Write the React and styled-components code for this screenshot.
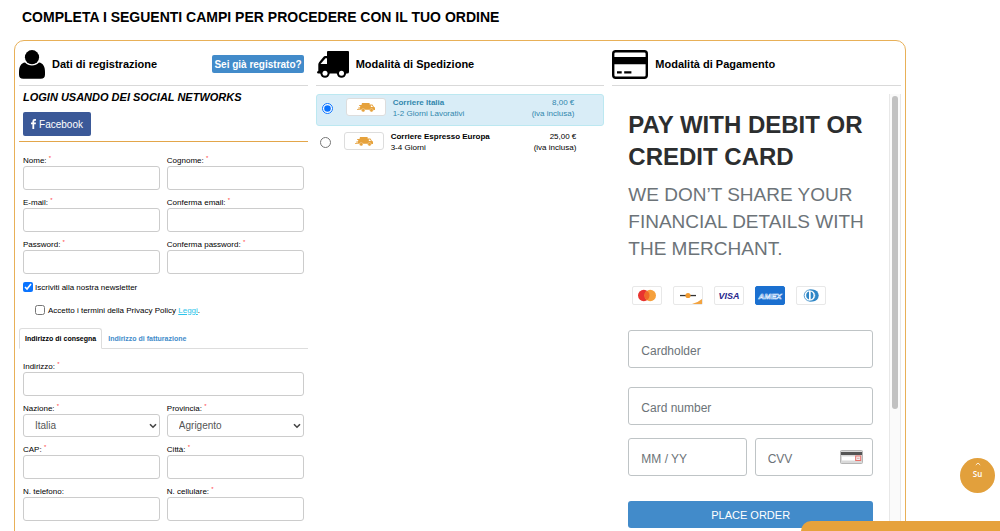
import React from "react";
import styled, { createGlobalStyle } from "styled-components";

const GlobalStyle = createGlobalStyle`
  * {
    box-sizing: border-box;
  }
  body {
    margin: 0;
    background: #fff;
    color: #000;
    font-family: "Helvetica Neue", "Liberation Sans", Arial, sans-serif;
    font-size: 8px;
  }
  input, select, button {
    font-family: inherit;
    margin: 0;
  }
`;

// page frame
const Page = styled.main`
  padding: 8px 94px 40px 14px;
`;

const PageTitle = styled.h1`
  margin: 0 0 14px;
  padding-left: 8px;
  font-size: 14px;
  line-height: 18px;
`;

const Panel = styled.div`
  display: grid;
  grid-template-columns: repeat(3, minmax(0, 1fr));
  gap: 8px;
  padding: 0 4px 40px;
  border: 1px solid #e8b058;
  border-radius: 10px;
`;

const Column = styled.section`
  display: flex;
  flex-direction: column;
`;

const ColumnHeader = styled.header`
  display: flex;
  align-items: center;
  gap: 7px;
  height: 45px;
  padding: 2px 4px 0 0;
  border-bottom: 1px solid #d9d9d9;
`;

const ColumnTitle = styled.h2`
  flex: 1;
  margin: 0;
  font-size: 11px;
  line-height: 16px;
`;

const LoginButton = styled.button`
  height: 18px;
  padding: 0 2px;
  border: 0;
  border-radius: 2px;
  background: #428bca;
  color: #fff;
  font-size: 10px;
  font-weight: bold;
`;

// registration column
const SocialBox = styled.div`
  padding: 4px 4px 5px;
  border-bottom: 1px solid #e3a64a;
`;

const SocialTitle = styled.h3`
  margin: 0 0 8px;
  font-size: 11px;
  font-style: italic;
  line-height: 14px;
`;

const FacebookButton = styled.button`
  display: flex;
  align-items: center;
  justify-content: center;
  gap: 3px;
  width: 68px;
  height: 24px;
  border: 0;
  border-radius: 2px;
  background: #3b5998;
  color: #fff;
  font-size: 10px;
`;

const Fields = styled.div`
  display: grid;
  grid-template-columns: 1fr 1fr;
  gap: 6px 7px;
  padding: ${props => props.$top}px 4px 0;
`;

const FieldBox = styled.div`
  display: flex;
  flex-direction: column;
  grid-column: ${props => (props.$wide ? "1 / -1" : "auto")};
`;

const Label = styled.label`
  height: 12px;
  line-height: 13px;
`;

const Required = styled.span`
  color: #f44;
  font-size: 6px;
  line-height: 1;
  vertical-align: 3px;
`;

const TextInput = styled.input`
  width: 100%;
  height: 24px;
  padding: 0 10px;
  border: 1px solid #ccc;
  border-radius: 3px;
  background: #fff;
  font-size: 10px;
`;

const SelectWrap = styled.div`
  display: grid;
  align-items: center;

  > * {
    grid-area: 1 / 1;
  }
  > svg {
    justify-self: end;
    margin-right: 3px;
    pointer-events: none;
  }
`;

const Select = styled.select`
  appearance: none;
  width: 100%;
  height: 23px;
  padding: 0 11px 1px;
  border: 1px solid #ccc;
  border-radius: 3px;
  background: #fff;
  color: #555;
  font-size: 10px;
`;

const CheckLabel = styled.label`
  display: flex;
  align-items: center;
  gap: ${props => (props.$nested ? 3 : 2)}px;
  height: 12px;
  margin: ${props => (props.$nested ? "11px 4px 0 16px" : "7px 4px 0")};

  input {
    width: 10px;
    height: 10px;
    accent-color: #0a74ff;
  }
  a {
    color: #2bc4ea;
    text-decoration: underline;
  }
`;

const Tabs = styled.div`
  display: flex;
  margin-top: 12px;
  border-bottom: 1px solid #ddd;
`;

const Tab = styled.button`
  height: 21px;
  margin-bottom: -1px;
  padding: 0 5px;
  border: 1px solid ${props => (props.$active ? "#ddd" : "transparent")};
  border-bottom-color: ${props => (props.$active ? "#fff" : "transparent")};
  border-radius: 3px 3px 0 0;
  background: ${props => (props.$active ? "#fff" : "transparent")};
  color: ${props => (props.$active ? "#000" : "#428bca")};
  font-size: 7px;
  font-weight: bold;
`;

// shipping column
const Carriers = styled.div`
  display: flex;
  flex-direction: column;
  gap: 4px;
  padding-top: 8px;
`;

const Carrier = styled.label`
  display: flex;
  align-items: flex-start;
  padding: ${props => (props.$selected ? "2px 29px 6px 5px" : "0 27px 6px 3px")};
  border: 1px solid ${props => (props.$selected ? "#bce8f1" : "transparent")};
  border-radius: 3px;
  background: ${props => (props.$selected ? "#d9edf7" : "transparent")};
  color: ${props => (props.$selected ? "#3187ad" : "#000")};
  line-height: 11px;

  input {
    width: 11px;
    height: 11px;
    margin-top: 6px;
    accent-color: #0a74ff;
  }
`;

const CarrierLogo = styled.span`
  display: flex;
  align-items: center;
  justify-content: center;
  width: 40px;
  height: 18px;
  margin: 1px 7px 0 13px;
  border: 1px solid #ddd;
  border-radius: 3px;
  background: #fff;
  color: #e6a23c;
`;

const CarrierName = styled.span`
  flex: 1;

  strong {
    display: block;
  }
`;

const CarrierPrice = styled.span`
  text-align: right;
`;

// payment column
const PaymentFrame = styled.div`
  display: flex;
  flex: 1;
  margin-top: 8px;
`;

const PaymentForm = styled.form`
  flex: 1;
  padding: 15px 16px 0;
  color: #2c2e2f;
`;

const PayTitle = styled.h3`
  margin: 0;
  font-size: 24px;
  line-height: 32px;
`;

const PayNote = styled.p`
  margin: 8px 0 24px;
  color: #6c7378;
  font-size: 19px;
  line-height: 27px;
`;

const CardLogos = styled.div`
  display: flex;
  gap: 11px;
  margin: 0 0 25px 4px;
`;

const CardLogo = styled.span`
  display: flex;
  width: 30px;
  height: 19px;
  border: 1px solid ${props => (props.$filled ? "#1b70d0" : "#e8e8e8")};
  border-radius: 2px;
  background: ${props => (props.$filled ? "#1b70d0" : "#fff")};
`;

const PayInput = styled.input`
  width: 100%;
  min-width: 0;
  height: 38px;
  padding: 3px 12px 0;
  border: 1px solid #bfc4c6;
  border-radius: 3px;
  background: #fff;
  color: #2c2e2f;
  font-size: 12px;

  &::placeholder {
    color: #6c7378;
    opacity: 1;
  }
`;

const PayRows = styled.div`
  display: grid;
  gap: 19px;
`;

const PayPair = styled.div`
  display: grid;
  grid-template-columns: 1fr 1fr;
  gap: 8px;
  margin: 13px 0 25px;
`;

const CvvWrap = styled.div`
  display: grid;
  align-items: center;

  > * {
    grid-area: 1 / 1;
  }
  > svg {
    justify-self: end;
    margin-right: 10px;
  }
`;

const PlaceOrder = styled.button`
  width: 100%;
  height: 27px;
  border: 0;
  border-radius: 3px;
  background: #428bca;
  color: #fff;
  font-size: 11px;
`;

const ScrollTrack = styled.div`
  width: 12px;
  padding: 2px;
  border: solid #e8e8e8;
  border-width: 0 1px;
  background: #fafafa;
`;

const ScrollThumb = styled.div`
  height: 313px;
  border-radius: 4px;
  background: #c1c1c1;
`;

// floating parts
const BackToTop = styled.a`
  position: fixed;
  right: 5px;
  bottom: 38px;
  display: flex;
  flex-direction: column;
  align-items: center;
  gap: 2px;
  width: 35px;
  height: 35px;
  padding-top: 4px;
  border-radius: 50%;
  background: #e2a03c;
  color: #fff;
  font-family: "Open Sans", sans-serif;
  font-size: 8px;
  font-weight: 600;
  line-height: 11px;
  text-decoration: none;
`;

const BottomBar = styled.div`
  position: fixed;
  right: 0;
  bottom: 0;
  width: 199px;
  height: 10px;
  border-radius: 10px 0 0 0;
  background: #e6a23c;
`;

const UserIcon = () => (
  <svg width="26" height="29" viewBox="0 0 26 29" aria-hidden="true">
    <circle cx="13" cy="7.200" r="7.100" />
    <path d="M6 12.400C2 12.800 0 16.500 0 22v2.500Q0 28.800 4.300 28.800h17.400Q26 28.800 26 24.500V22c0-5.500-2-9.200-6-9.600-1.800 2-4.200 3-7 3s-5.200-1-7-3z" />
  </svg>
);

const TruckIcon = () => (
  <svg width="33" height="27" viewBox="0 0 33 27" aria-hidden="true">
    <path d="M12 0h20q1 0 1 1v20q0 1.500-2 1.500H2.500Q1 22.500 1 21.200q0-1 1.300-1.200v-6.500q0-1.500 1-2.500l3.700-4.600Q8 5 9.500 5H11V1q0-1 1-1z" />
    <path d="M11 7.300H9.500L4.500 13H11z" fill="#fff" />
    <circle cx="9" cy="22.200" r="4.600" />
    <circle cx="25.500" cy="22.200" r="4.600" />
    <circle cx="9" cy="22.200" r="2.500" fill="#fff" />
    <circle cx="25.500" cy="22.200" r="2.500" fill="#fff" />
  </svg>
);

const CardIcon = () => (
  <svg width="36" height="29" viewBox="0 0 36 29" aria-hidden="true">
    <rect x="1.200" y="1.200" width="33.600" height="26.600" rx="2.500" fill="none" stroke="#000" strokeWidth="2.400" />
    <path d="M1 7h34v7.300H1zM5 21.300h4.700v2.300H5zM12.200 21.300h7.200v2.300h-7.200z" />
  </svg>
);

const FacebookIcon = () => (
  <svg width="5" height="10" viewBox="0 0 5 10" fill="currentColor" aria-hidden="true">
    <path d="M5 .1v1.600H4q-.8 0-.8.8v1.100H5l-.25 1.700H3.200V10H1.400V5.300H0V3.600h1.400V2.300Q1.400 0 3.700 0z" />
  </svg>
);

const ChevronDown = () => (
  <svg width="8" height="6" viewBox="0 0 8 6" fill="none" aria-hidden="true">
    <path d="M1 1.200l3 3 3-3" stroke="#444" strokeWidth="1.600" />
  </svg>
);

const FastTruck = () => (
  <svg width="18" height="9" viewBox="0 0 18 9" fill="currentColor" aria-hidden="true">
    <path d="M5 0h7.600v6.800H2.600L3 5.500H1l.4-1H3L3.300 3H2l.4-1h2.100zM12.500 1.400h2.900L17 4l1 .6v2.400h-5.500z" />
    <path d="M0 6.200h2.800v.8H0z" />
    <path d="M13.800 2.400h1.200l1 1.600h-2.200z" fill="#fff" />
    <circle cx="6.200" cy="7.200" r="1.700" stroke="#fff" strokeWidth=".3" />
    <circle cx="14.500" cy="7.200" r="1.700" stroke="#fff" strokeWidth=".3" />
  </svg>
);

const MastercardLogo = () => (
  <svg width="28" height="17" viewBox="0 0 28 17" aria-hidden="true">
    <circle cx="10.800" cy="8.500" r="5.800" fill="#e8342f" />
    <circle cx="17.200" cy="8.500" r="5.800" fill="#f5a03c" />
    <path d="M14 3.700a5.800 5.800 0 0 1 0 9.600 5.800 5.800 0 0 1 0-9.600z" fill="#f06a28" />
  </svg>
);

const DiscoverLogo = () => (
  <svg width="28" height="17" viewBox="0 0 28 17" aria-hidden="true">
    <path d="M6 7.900h16v1.300H6z" fill="#333" />
    <circle cx="14" cy="8.500" r="2.600" fill="#f09a30" />
    <path d="M28 12v5H18q6-1.500 10-5z" fill="#f3a33f" />
  </svg>
);

const VisaLogo = () => (
  <svg width="28" height="17" viewBox="0 0 28 17" aria-hidden="true">
    <text x="14" y="11.500" textAnchor="middle" fontSize="9" fontWeight="bold" fontStyle="italic" fill="#26268c">VISA</text>
  </svg>
);

const AmexLogo = () => (
  <svg width="28" height="17" viewBox="0 0 28 17" aria-hidden="true">
    <text x="14" y="11.500" textAnchor="middle" fontSize="8" fontWeight="bold" fontStyle="italic" fill="#1b70d0" stroke="#e8f2ff" strokeWidth=".6">AMEX</text>
  </svg>
);

const DinersLogo = () => (
  <svg width="28" height="17" viewBox="0 0 28 17" aria-hidden="true">
    <path d="M12.500 2.500h3.200a6 6 0 0 1 0 12h-3.200z" fill="#2e86c6" />
    <circle cx="12.800" cy="8.500" r="5.600" fill="#fff" stroke="#2e86c6" strokeWidth=".8" />
    <path d="M12 4.600a4.100 4.100 0 0 0 0 7.800zM13.700 4.600a4.100 4.100 0 0 1 0 7.800z" fill="#2e86c6" />
  </svg>
);

const CvvIcon = () => (
  <svg width="23" height="14" viewBox="0 0 23 14" aria-hidden="true">
    <rect x=".5" y=".5" width="22" height="13" rx="1" fill="#d9d9d9" stroke="#b5b5b5" />
    <path d="M1 2h21v3H1z" fill="#555" />
    <path d="M2 6.500h13v4H2z" fill="#fff" />
    <rect x="15.700" y="6" width="5" height="4.500" fill="#f5eded" stroke="#e8706a" />
    <path d="M17 8.300h2.500" stroke="#c99" strokeWidth=".8" />
  </svg>
);

const ChevronUp = () => (
  <svg width="6" height="4" viewBox="0 0 6 4" fill="none" aria-hidden="true">
    <path d="M.8 3L3 1l2.200 2" stroke="#fff" strokeWidth=".8" />
  </svg>
);

const accountFields = [
  { id: "nome", label: "Nome:" },
  { id: "cognome", label: "Cognome:" },
  { id: "email", label: "E-mail:", type: "email" },
  { id: "email2", label: "Conferma email:", type: "email" },
  { id: "password", label: "Password:", type: "password" },
  { id: "password2", label: "Conferma password:", type: "password" }
];

const addressFields = [
  { id: "indirizzo", label: "Indirizzo:", wide: true },
  { id: "nazione", label: "Nazione:", options: ["Italia"] },
  { id: "provincia", label: "Provincia:", options: ["Agrigento"] },
  { id: "cap", label: "CAP:" },
  { id: "citta", label: "Città:" },
  { id: "telefono", label: "N. telefono:", optional: true },
  { id: "cellulare", label: "N. cellulare:" }
];

const carriers = [
  { id: "italia", name: "Corriere Italia", time: "1-2 Giorni Lavorativi", price: "8,00 €" },
  { id: "europa", name: "Corriere Espresso Europa", time: "3-4 Giorni", price: "25,00 €" }
];

const cardLogos = [
  { id: "mastercard", logo: <MastercardLogo /> },
  { id: "discover", logo: <DiscoverLogo /> },
  { id: "visa", logo: <VisaLogo /> },
  { id: "amex", logo: <AmexLogo />, filled: true },
  { id: "diners", logo: <DinersLogo /> }
];

const Field = ({ field }) => (
  <FieldBox $wide={field.wide}>
    <Label htmlFor={field.id}>
      {field.label} {!field.optional && <Required>*</Required>}
    </Label>
    {field.options ? (
      <SelectWrap>
        <Select id={field.id}>
          {field.options.map(option => (
            <option key={option}>{option}</option>
          ))}
        </Select>
        <ChevronDown />
      </SelectWrap>
    ) : (
      <TextInput id={field.id} type={field.type || "text"} />
    )}
  </FieldBox>
);

class App extends React.Component {
  state = {
    carrier: "italia",
    tab: "consegna"
  };

  renderRegistration() {
    const { tab } = this.state;
    return (
      <Column>
        <ColumnHeader>
          <UserIcon />
          <ColumnTitle>Dati di registrazione</ColumnTitle>
          <LoginButton type="button">Sei già registrato?</LoginButton>
        </ColumnHeader>
        <SocialBox>
          <SocialTitle>LOGIN USANDO DEI SOCIAL NETWORKS</SocialTitle>
          <FacebookButton type="button">
            <FacebookIcon />
            Facebook
          </FacebookButton>
        </SocialBox>
        <Fields $top={12}>
          {accountFields.map(field => (
            <Field key={field.id} field={field} />
          ))}
        </Fields>
        <CheckLabel>
          <input type="checkbox" defaultChecked />
          Iscriviti alla nostra newsletter
        </CheckLabel>
        <CheckLabel $nested>
          <input type="checkbox" />
          <span>
            Accetto i termini della Privacy Policy <a href="#privacy">Leggi</a>.
          </span>
        </CheckLabel>
        <Tabs role="tablist">
          <Tab
            type="button"
            role="tab"
            aria-selected={tab === "consegna"}
            $active={tab === "consegna"}
            onClick={() => this.setState({ tab: "consegna" })}
          >
            Indirizzo di consegna
          </Tab>
          <Tab
            type="button"
            role="tab"
            aria-selected={tab === "fatturazione"}
            $active={tab === "fatturazione"}
            onClick={() => this.setState({ tab: "fatturazione" })}
          >
            Indirizzo di fatturazione
          </Tab>
        </Tabs>
        <Fields $top={11}>
          {addressFields.map(field => (
            <Field key={field.id} field={field} />
          ))}
        </Fields>
      </Column>
    );
  }

  renderShipping() {
    return (
      <Column>
        <ColumnHeader>
          <TruckIcon />
          <ColumnTitle>Modalità di Spedizione</ColumnTitle>
        </ColumnHeader>
        <Carriers>
          {carriers.map(carrier => {
            const selected = this.state.carrier === carrier.id;
            return (
              <Carrier key={carrier.id} $selected={selected}>
                <input
                  type="radio"
                  name="carrier"
                  checked={selected}
                  onChange={() => this.setState({ carrier: carrier.id })}
                />
                <CarrierLogo>
                  <FastTruck />
                </CarrierLogo>
                <CarrierName>
                  <strong>{carrier.name}</strong>
                  {carrier.time}
                </CarrierName>
                <CarrierPrice>
                  {carrier.price}
                  <br />
                  (iva inclusa)
                </CarrierPrice>
              </Carrier>
            );
          })}
        </Carriers>
      </Column>
    );
  }

  renderPayment() {
    return (
      <Column>
        <ColumnHeader>
          <CardIcon />
          <ColumnTitle>Modalità di Pagamento</ColumnTitle>
        </ColumnHeader>
        <PaymentFrame>
          <PaymentForm onSubmit={e => e.preventDefault()}>
            <PayTitle>PAY WITH DEBIT OR CREDIT CARD</PayTitle>
            <PayNote>WE DON’T SHARE YOUR FINANCIAL DETAILS WITH THE MERCHANT.</PayNote>
            <CardLogos>
              {cardLogos.map(card => (
                <CardLogo key={card.id} $filled={card.filled}>
                  {card.logo}
                </CardLogo>
              ))}
            </CardLogos>
            <PayRows>
              <PayInput aria-label="Cardholder" placeholder="Cardholder" />
              <PayInput aria-label="Card number" placeholder="Card number" />
            </PayRows>
            <PayPair>
              <PayInput aria-label="Expiry date" placeholder="MM / YY" />
              <CvvWrap>
                <PayInput aria-label="CVV" placeholder="CVV" />
                <CvvIcon />
              </CvvWrap>
            </PayPair>
            <PlaceOrder type="submit">PLACE ORDER</PlaceOrder>
          </PaymentForm>
          <ScrollTrack>
            <ScrollThumb />
          </ScrollTrack>
        </PaymentFrame>
      </Column>
    );
  }

  render() {
    return (
      <>
        <GlobalStyle />
        <Page>
          <PageTitle>COMPLETA I SEGUENTI CAMPI PER PROCEDERE CON IL TUO ORDINE</PageTitle>
          <Panel>
            {this.renderRegistration()}
            {this.renderShipping()}
            {this.renderPayment()}
          </Panel>
        </Page>
        <BackToTop href="#top">
          <ChevronUp />
          Su
        </BackToTop>
        <BottomBar />
      </>
    );
  }
}

export default App;
